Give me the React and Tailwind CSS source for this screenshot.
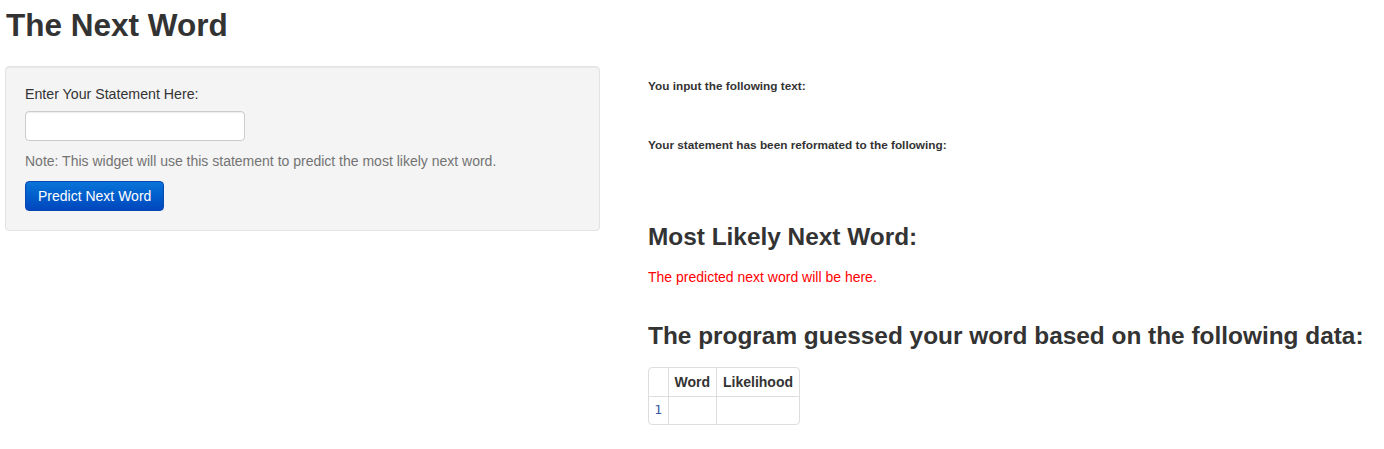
import React from "react";

export default function App() {
  return (
    <div
      className="min-h-[449px] bg-white text-[#333] text-[14px] leading-[20px] px-[5px]"
      style={{ fontFamily: '"Liberation Sans", Arial, sans-serif' }}
    >
      <h2 className="mt-[9px] text-[31.5px] leading-[33px] font-bold pl-[1px]">The Next Word</h2>
      <div className="flex mt-[24px]">
        <div className="w-[595px] shrink-0">
          <div className="bg-[#f4f4f4] border border-[#e3e3e3] rounded-[4px] pt-[17px] pb-[19px] px-[19px] shadow-[inset_0_1px_1px_rgba(0,0,0,0.05)]">
            <label className="block mb-[7px] text-[14.2px]">Enter Your Statement Here:</label>
            <input
              type="text"
              className="block w-[220px] h-[30px] bg-white border border-[#ccc] rounded-[4px] shadow-[inset_0_1px_1px_rgba(0,0,0,0.075)] px-[8px] outline-none"
            />
            <p className="mt-[10px] text-[#737373]">
              Note: This widget will use this statement to predict the most likely next word.
            </p>
            <button className="mt-[10px] h-[30px] px-[12px] rounded-[4px] border border-[#0748b3] bg-gradient-to-b from-[#0b74d8] to-[#0046be] text-white text-[14px] leading-[20px]">
              Predict Next Word
            </button>
          </div>
        </div>
        <div className="ml-[48px] flex-1">
          <h6 className="mt-[14px] text-[11.8px] leading-[13px] font-bold">You input the following text:</h6>
          <h6 className="mt-[46px] text-[11.8px] leading-[13px] font-bold">
            Your statement has been reformated to the following:
          </h6>
          <h3 className="mt-[72px] text-[24.4px] leading-[26px] font-bold">Most Likely Next Word:</h3>
          <p className="mt-[17px] text-[#ff0000]">The predicted next word will be here.</p>
          <h3 className="mt-[36px] text-[24.4px] leading-[26px] font-bold">
            The program guessed your word based on the following data:
          </h3>
          <div className="mt-[18px] inline-block border border-[#ddd] rounded-[4px] overflow-hidden">
            <table className="border-collapse">
              <thead>
                <tr className="h-[28px]">
                  <th className="w-[19px] border-r border-b border-[#ddd]"></th>
                  <th className="px-[6px] font-bold text-left border-r border-b border-[#ddd]">Word</th>
                  <th className="px-[6px] font-bold text-left border-b border-[#ddd]">Likelihood</th>
                </tr>
              </thead>
              <tbody>
                <tr className="h-[28px]">
                  <td
                    className="text-center text-[13px] text-[#3a5aa0] border-r border-[#ddd]"
                    style={{ fontFamily: '"DejaVu Sans Mono", monospace' }}
                  >
                    1
                  </td>
                  <td className="border-r border-[#ddd]"></td>
                  <td></td>
                </tr>
              </tbody>
            </table>
          </div>
        </div>
      </div>
    </div>
  );
}
